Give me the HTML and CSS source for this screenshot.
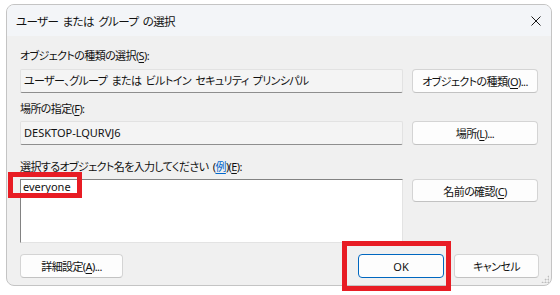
FILE: index.html
```html
<!DOCTYPE html>
<html lang="ja">
<head>
  <meta charset="UTF-8">
  <title>ユーザー または グループ の選択</title>
  <link rel="stylesheet" href="styles.css">
</head>
<body>
  <div class="dialog">
    <div class="titlebar">
      <span class="title jp">ユーザー または グループ の選択</span>
      <svg class="close" width="10" height="10" viewBox="0 0 10 10"><path d="M0.5 0.5L9.5 9.5M9.5 0.5L0.5 9.5" stroke="#1a1a1a" stroke-width="1"/></svg>
    </div>
    <div class="content">
      <div class="form">
        <div class="label jp">オブジェクトの種類の選択(<u>S</u>):</div>
        <div class="field jp">ユーザー、グループ または ビルトイン セキュリティ プリンシパル</div>
        <button class="btn jp">オブジェクトの種類(<u>O</u>)...</button>

        <div class="label jp gap1">場所の指定(<u>F</u>):</div>
        <div class="field">DESKTOP-LQURVJ6</div>
        <button class="btn jp">場所(<u>L</u>)...</button>

        <div class="label jp gap2">選択するオブジェクト名を入力してください (<a class="link">例</a>)(<u>E</u>):</div>
        <div class="textbox">everyone</div>
        <button class="btn jp top">名前の確認(<u>C</u>)</button>
      </div>
      <div class="footer">
        <button class="btn jp wide">詳細設定(<u>A</u>)...</button>
        <div class="spacer"></div>
        <button class="btn small default">OK</button>
        <button class="btn jp small">キャンセル</button>
      </div>
    </div>
    <div class="grip"></div>
  </div>
  <div class="mark mark-name"></div>
  <div class="mark mark-ok"></div>
</body>
</html>
```

FILE: styles.css
```css
* { box-sizing: border-box; }
html, body {
  margin: 0; padding: 0;
  width: 100%; height: 100%;
  background: #fff;
  overflow: hidden;
  position: relative;
  font-family: "Noto Sans", "Noto Sans CJK JP", sans-serif;
  font-feature-settings: "palt";
  font-size: 11px;
  color: #111;
}
.jp { letter-spacing: -0.6px; word-spacing: 2px; }
.dialog {
  position: relative;
  margin: 4px 0 0 6px;
  width: 546px; height: 282px;
  border: 1px solid #c4c4c4;
  border-radius: 8px;
  background: #f0f0f0;
  overflow: hidden;
}
.titlebar {
  height: 31px;
  display: flex; align-items: center; justify-content: space-between;
  padding: 0 10px 0 9px;
  background: #f3f5f8;
}
.title { font-size: 11.5px; }
.close { display: block; }
.content { padding: 12px 12px 0 13px; }
.form {
  display: grid;
  grid-template-columns: 383px 126px;
  column-gap: 9px;
  align-items: start;
}
.label {
  grid-column: 1 / 3;
  line-height: 16px;
  margin-bottom: 5px;
}
.label.gap1 { margin-top: 8px; margin-bottom: 4px; }
.label.gap2 { margin-top: 14px; margin-bottom: 4px; }
u { text-underline-offset: 2px; }
.link { color: #0066cc; text-decoration: underline; text-underline-offset: 2px; }
.field {
  height: 24px;
  padding: 0 3px;
  line-height: 22px;
  background: #f4f4f4;
  border: 1px solid #e2e2e2;
  border-bottom-color: #8e8e8e;
  border-radius: 2px;
  white-space: nowrap;
}
.textbox {
  height: 64px;
  padding: 0 2px;
  line-height: 14px;
  background: #fff;
  border: 1px solid #e3e3e3;
  border-top-color: #828282;
  border-left-color: #828282;
}
.btn {
  height: 24px;
  padding: 0 4px;
  font: inherit;
  color: #111;
  background: #fdfdfd;
  border: 1px solid #d4d4d4;
  border-bottom-color: #c2c2c2;
  border-radius: 4px;
  white-space: nowrap;
}
.btn.top { height: 23px; }
.footer {
  display: flex; gap: 10px;
  margin-top: 11px;
}
.spacer { flex: 1; }
.btn.wide { width: 103px; }
.btn.small { width: 86px; }
.btn.small + .btn.small { width: 85px; }
.btn.default { border-color: #0067c0; }
.grip {
  position: absolute; right: 2px; bottom: 2px;
  width: 8px; height: 8px;
  background:
    radial-gradient(circle, #bdbdbd 0.8px, transparent 1.2px) 0 0 / 3px 3px;
  clip-path: polygon(100% 0, 100% 100%, 0 100%);
}
.mark {
  position: absolute;
  border: 5px solid #e81c24;
  pointer-events: none;
}
.mark-name { left: 8px; top: 172px; width: 74px; height: 26px; }
.mark-ok { left: 342px; top: 241px; width: 109px; height: 50px; }
```
